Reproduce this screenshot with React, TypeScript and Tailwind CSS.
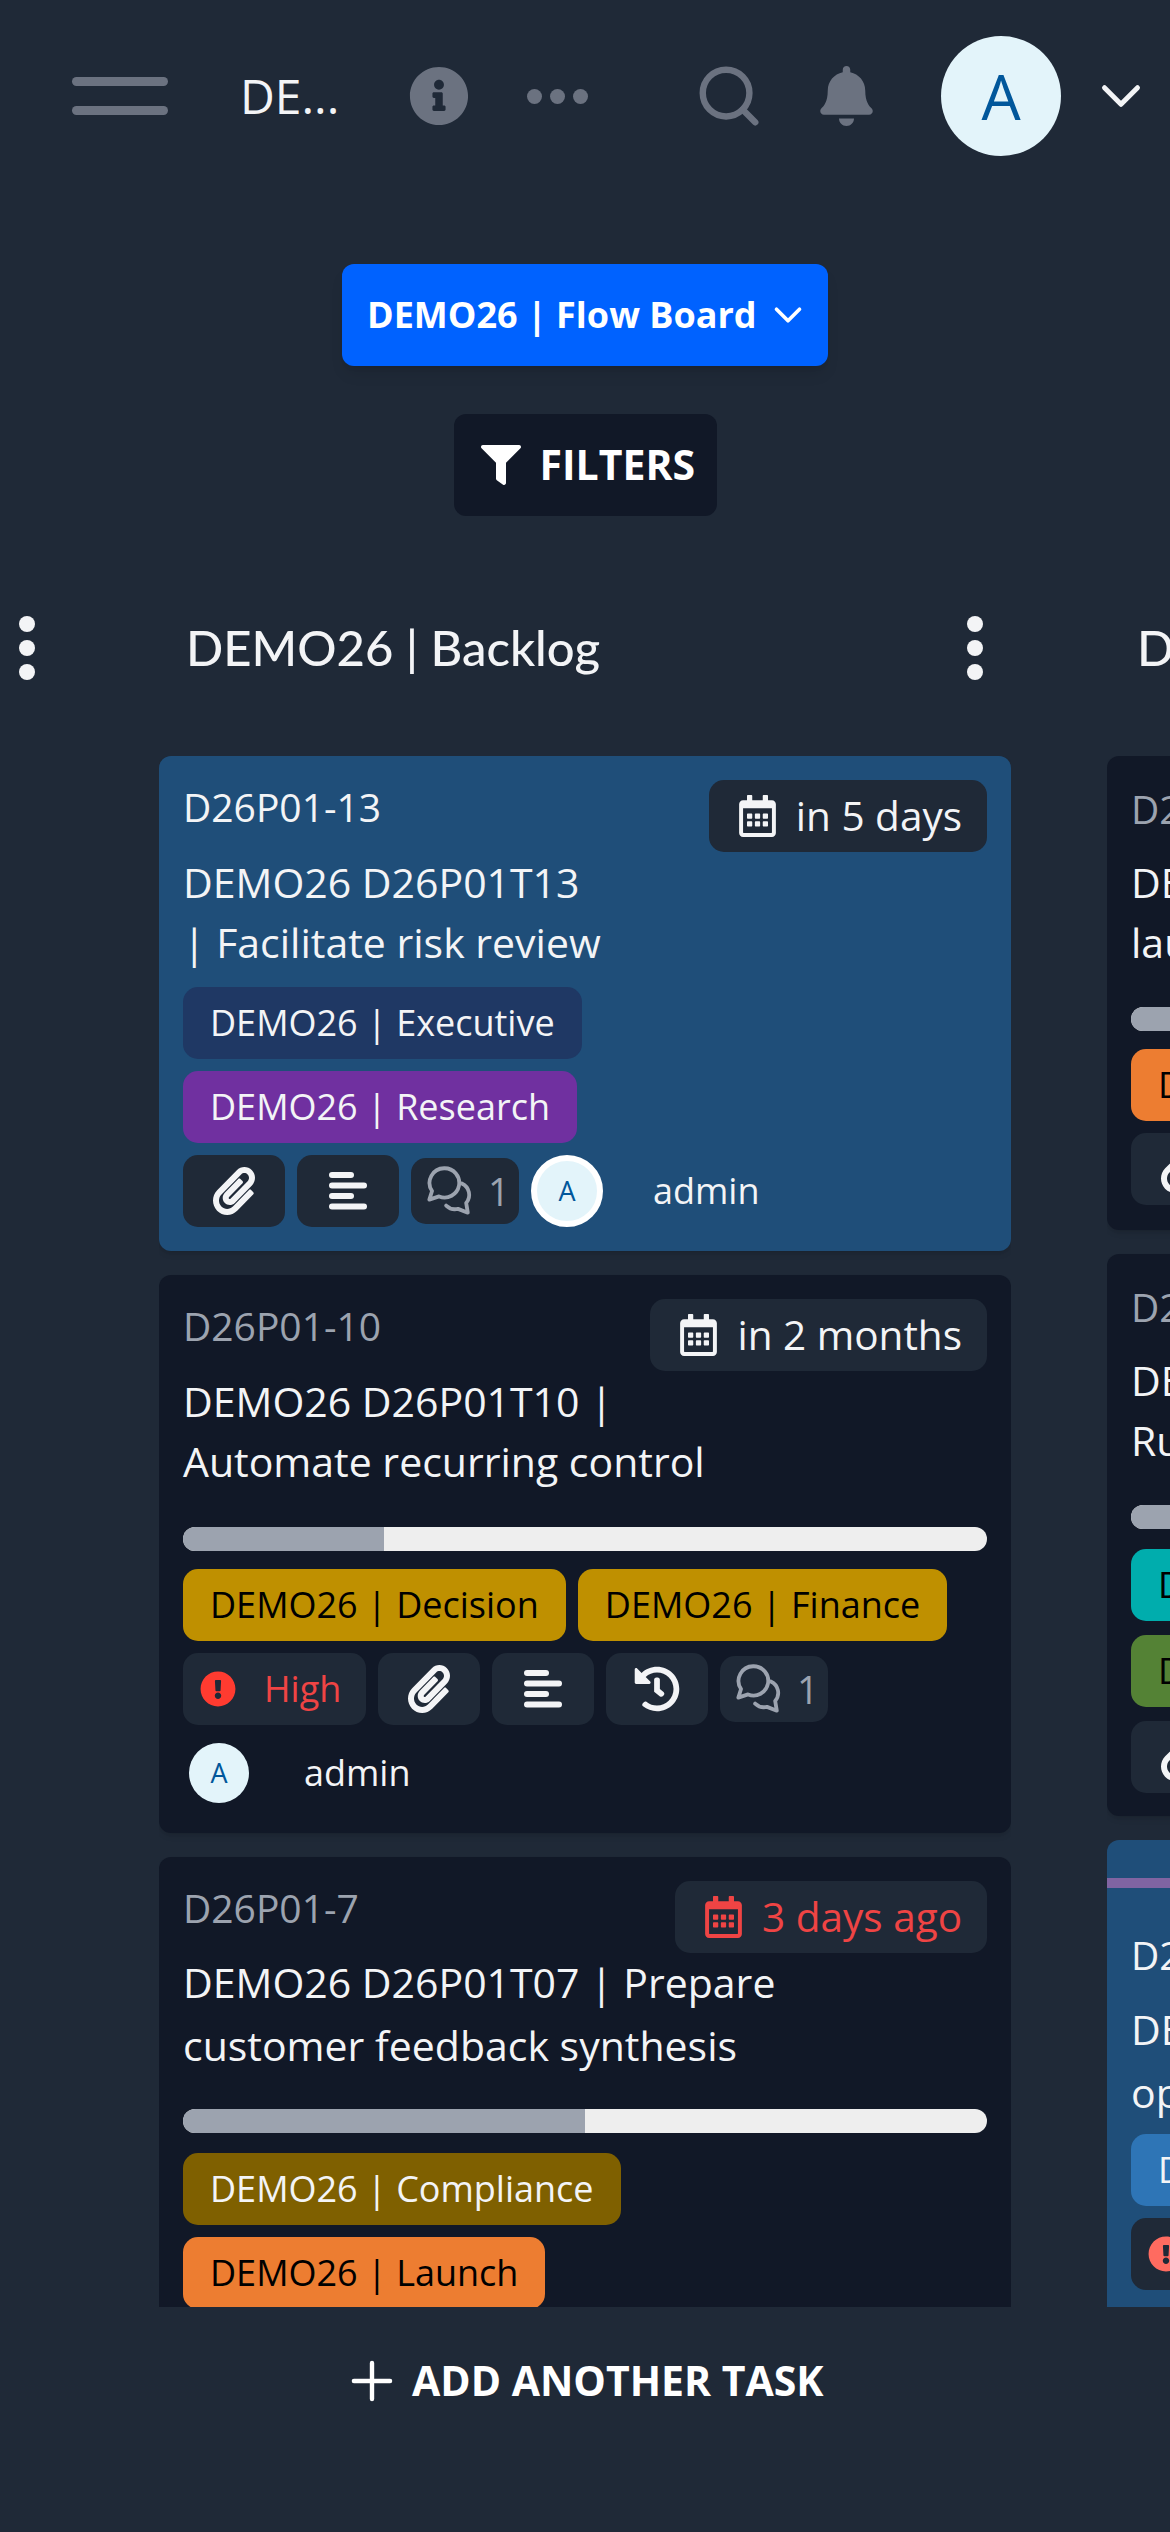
import { FaBell, FaExclamationCircle, FaFilter, FaHistory, FaInfoCircle, FaPaperclip, FaRegCalendarAlt } from "react-icons/fa";
import { FiChevronDown, FiPlus, FiSearch } from "react-icons/fi";

const IconBtn = ({ children }: { children: React.ReactNode }) => (
  <div className="flex h-[72px] w-[102px] shrink-0 items-center justify-center rounded-[15px] bg-[#1f2937] text-[#f3f4f6]">
    {children}
  </div>
);

const AlignIcon = () => (
  <svg width="38" height="38" viewBox="0 0 38 38" fill="currentColor">
    <rect x="0" y="0" width="25" height="6" rx="3" />
    <rect x="0" y="10.5" width="38" height="6" rx="3" />
    <rect x="0" y="21" width="25" height="6" rx="3" />
    <rect x="0" y="31.5" width="38" height="6" rx="3" />
  </svg>
);

const CommentsIcon = () => (
  <svg width="52" height="52" viewBox="0 0 48 48" fill="none" stroke="#9ca3af" strokeWidth="3.5" strokeLinejoin="round" strokeLinecap="round">
    <path d="M18 3a13.5 13.5 0 1 1-5 26l-9 3 2.500-8A13.500 13.500 0 0 1 18 3z" />
    <path d="M34 17a11.500 11.500 0 0 1 4 18l1.500 9-9-3.500a12 12 0 0 1-11-3" />
  </svg>
);

const Comments = () => (
  <div className="flex h-[66px] w-[108px] shrink-0 items-center gap-[11px] rounded-[15px] bg-[#1f2937] pl-[14px] text-[38px] text-[#9ca3af]">
    <CommentsIcon />
    <span>1</span>
  </div>
);

const Avatar = ({ ring }: { ring?: boolean }) => (
  <div
    className={
      ring
        ? "flex h-[72px] w-[72px] shrink-0 items-center justify-center rounded-full border-[6px] border-white bg-[#e3f4fa] text-[27px] text-[#01579b]"
        : "ml-[6px] flex h-[60px] w-[60px] shrink-0 items-center justify-center rounded-full bg-[#e3f4fa] text-[27px] text-[#01579b]"
    }
  >
    A
  </div>
);

const Tag = ({ className, children }: { className: string; children: React.ReactNode }) => (
  <div className={`flex h-[72px] shrink-0 items-center rounded-[15px] px-[27px] text-[36px] whitespace-nowrap ${className}`}>
    {children}
  </div>
);

const Chip = ({ children, red }: { children: React.ReactNode; red?: boolean }) => (
  <div
    className={
      red
        ? "flex h-[72px] items-center gap-[20px] rounded-[15px] bg-[#1f2937] pr-[25px] pl-[30px] text-[40.500px] text-[#ef4444]"
        : "flex h-[72px] items-center gap-[20px] rounded-[15px] bg-[#1f2937] pr-[25px] pl-[30px] text-[40.500px] text-[#f3f4f6]"
    }
  >
    <FaRegCalendarAlt className="h-[42px] w-[37px]" />
    <span>{children}</span>
  </div>
);

const Progress = ({ percent, className }: { percent: number; className: string }) => (
  <div className={`h-[24px] overflow-hidden rounded-full bg-[#eeeeee] ${className}`}>
    <div className="h-full bg-[#9ca3af]" style={{ width: `${percent}%` }} />
  </div>
);

const Dots = () => (
  <div className="flex w-[16px] shrink-0 flex-col gap-[8px]">
    <span className="h-[16px] w-[16px] rounded-full bg-[#f3f4f6]" />
    <span className="h-[16px] w-[16px] rounded-full bg-[#f3f4f6]" />
    <span className="h-[16px] w-[16px] rounded-full bg-[#f3f4f6]" />
  </div>
);

const Paperclip = () => <FaPaperclip className="h-[48px] w-[48px]" />;

const BacklogColumn = () => (
  <div className="w-[852px] shrink-0">
    <div className="flex h-[96px] items-center justify-between pr-[28px] pl-[27px]">
      <h2 className="font-['Lato'] text-[49px] font-medium text-[#f3f4f6]">DEMO26 | Backlog</h2>
      <Dots />
    </div>
    <div className="mt-[60px] flex h-[1551px] flex-col gap-[24px] overflow-hidden">
      {/* selected card */}
      <div className="shrink-0 rounded-[12px] bg-[#1f4e79] p-[24px] shadow-md">
        <div className="flex items-start justify-between">
          <span className="text-[39px] leading-[54px] text-[#f3f4f6]">D26P01-13</span>
          <Chip>in 5 days</Chip>
        </div>
        <p className="text-[41px] leading-[60px] text-[#f3f4f6]">
          DEMO26 D26P01T13
          <br />| Facilitate risk review
        </p>
        <div className="mt-[15px] flex flex-col items-start gap-[12px]">
          <Tag className="bg-[#1f3864] text-[#f3f4f6]">DEMO26 | Executive</Tag>
          <Tag className="bg-[#7030a0] text-[#f3f4f6]">DEMO26 | Research</Tag>
        </div>
        <div className="mt-[12px] flex items-center gap-[12px]">
          <IconBtn><Paperclip /></IconBtn>
          <IconBtn><AlignIcon /></IconBtn>
          <Comments />
          <Avatar ring />
          <span className="ml-[38px] text-[36px] text-[#f3f4f6]">admin</span>
        </div>
      </div>

      <div className="shrink-0 rounded-[12px] bg-[#111827] px-[24px] pt-[24px] pb-[30px] shadow-md">
        <div className="flex items-start justify-between">
          <span className="text-[39px] leading-[54px] text-[#9ca3af]">D26P01-10</span>
          <Chip>in 2 months</Chip>
        </div>
        <p className="text-[41px] leading-[60px] text-[#f3f4f6]">
          DEMO26 D26P01T10 |
          <br />
          Automate recurring control
        </p>
        <Progress percent={25} className="mt-[36px]" />
        <div className="mt-[18px] flex gap-[12px]">
          <Tag className="bg-[#bf9000] text-black">DEMO26 | Decision</Tag>
          <Tag className="bg-[#bf9000] text-black">DEMO26 | Finance</Tag>
        </div>
        <div className="mt-[12px] flex items-center gap-[12px]">
          <div className="flex h-[72px] w-[183px] items-center gap-[28px] rounded-[15px] bg-[#1f2937] pl-[17px] text-[36px] text-[#ef4444]">
            <FaExclamationCircle className="h-[36px] w-[36px] text-[#ff3b30]" />
            High
          </div>
          <IconBtn><Paperclip /></IconBtn>
          <IconBtn><AlignIcon /></IconBtn>
          <IconBtn><FaHistory className="h-[46px] w-[46px]" /></IconBtn>
          <Comments />
        </div>
        <div className="mt-[18px] flex items-center">
          <Avatar />
          <span className="ml-[55px] text-[36px] text-[#f3f4f6]">admin</span>
        </div>
      </div>

      <div className="shrink-0 rounded-[12px] bg-[#111827] p-[24px] shadow-md">
        <div className="flex items-start justify-between">
          <span className="text-[39px] leading-[54px] text-[#9ca3af]">D26P01-7</span>
          <Chip red>3 days ago</Chip>
        </div>
        <p className="-mt-[2px] text-[41px] leading-[63px] text-[#f3f4f6]">
          DEMO26 D26P01T07 | Prepare
          <br />
          customer feedback synthesis
        </p>
        <Progress percent={50} className="mt-[32px]" />
        <div className="mt-[20px] flex flex-col items-start gap-[12px]">
          <Tag className="bg-[#7f6000] text-[#f3f4f6]">DEMO26 | Compliance</Tag>
          <Tag className="bg-[#ed7d31] text-black">DEMO26 | Launch</Tag>
        </div>
      </div>
    </div>
  </div>
);

// only the left edge of this column is on screen
const NextColumn = () => (
  <div className="w-[852px] shrink-0">
    <div className="flex h-[96px] items-center pl-[30px]">
      <h2 className="font-['Lato'] text-[49px] font-medium text-[#f3f4f6]">DEMO26</h2>
    </div>
    <div className="mt-[60px] flex h-[1551px] flex-col gap-[24px] overflow-hidden text-[41px] text-[#f3f4f6]">
      <div className="h-[474px] shrink-0 rounded-[12px] bg-[#111827] px-[24px] pt-[30px] shadow-md">
        <div className="text-[39px] leading-[45px] text-[#9ca3af]">D26</div>
        <p className="mt-[21px] leading-[60px]">DEMO26<br />launch</p>
        <Progress percent={25} className="mt-[35px]" />
        <Tag className="mt-[18px] w-[300px] bg-[#ed7d31] text-black">DEMO26</Tag>
        <div className="mt-[12px]"><IconBtn><Paperclip /></IconBtn></div>
      </div>
      <div className="h-[562px] shrink-0 rounded-[12px] bg-[#111827] px-[24px] pt-[30px] shadow-md">
        <div className="text-[39px] leading-[45px] text-[#9ca3af]">D26</div>
        <p className="mt-[21px] leading-[60px]">DEMO26<br />Run</p>
        <Progress percent={25} className="mt-[35px]" />
        <Tag className="mt-[20px] w-[300px] bg-[#00adad] text-black">DEMO26</Tag>
        <Tag className="mt-[14px] w-[300px] bg-[#548235] text-black">DEMO26</Tag>
        <div className="mt-[14px]"><IconBtn><Paperclip /></IconBtn></div>
      </div>
      <div className="h-[470px] shrink-0 rounded-t-[12px] bg-[#1f4e79] pt-[38px]">
        <div className="h-[10px] bg-[#8064a2]" />
        <div className="px-[24px] pt-[44px]">
          <div className="text-[39px] leading-[45px]">D26</div>
          <p className="mt-[21px] leading-[63px]">DEMO26<br />open</p>
          <Tag className="mt-[10px] w-[300px] bg-[#2e75b6] text-[#f3f4f6]">DEMO26</Tag>
          <div className="mt-[12px] flex h-[72px] w-[183px] items-center rounded-[15px] bg-[#1f2937] pl-[17px]">
            <FaExclamationCircle className="h-[36px] w-[36px] text-[#ff6b60]" />
          </div>
        </div>
      </div>
    </div>
  </div>
);

export default function App() {
  return (
    <div className="flex h-[2532px] w-[1170px] flex-col overflow-hidden bg-[#1f2937] font-['Open_Sans',sans-serif]">
      <header className="flex items-center pt-[36px] pl-[72px] text-[#6b7280]">
        <div className="flex w-[96px] flex-col gap-[20px]">
          <span className="h-[9px] rounded-full bg-[#6b7280]" />
          <span className="h-[9px] rounded-full bg-[#6b7280]" />
        </div>
        <span className="ml-[72px] w-[96px] text-[48px] text-[#f3f4f6]">DE...</span>
        <FaInfoCircle className="ml-[73px] h-[60px] w-[60px]" />
        <div className="ml-[58px] flex gap-[8px]">
          <span className="h-[15px] w-[15px] rounded-full bg-[#6b7280]" />
          <span className="h-[15px] w-[15px] rounded-full bg-[#6b7280]" />
          <span className="h-[15px] w-[15px] rounded-full bg-[#6b7280]" />
        </div>
        <FiSearch className="ml-[106px] h-[70px] w-[70px] stroke-[2.2]" />
        <FaBell className="ml-[56px] h-[60px] w-[53px]" />
        <div className="ml-[68px] flex h-[120px] w-[120px] items-center justify-center rounded-full bg-[#e3f4fa] text-[62px] font-medium text-[#01579b]">
          A
        </div>
        <FiChevronDown className="ml-[27px] h-[66px] w-[66px] shrink-0 stroke-[1.8] text-[#f3f4f6]" />
      </header>

      <div className="mt-[108px] flex justify-center">
        <button className="flex h-[102px] w-[486px] items-center gap-[8px] rounded-[12px] bg-[#0062ff] pl-[25px] text-[36px] font-bold text-white shadow-lg">
          DEMO26 | Flow Board
          <FiChevronDown className="h-[46px] w-[46px] shrink-0 stroke-[1.9]" />
        </button>
      </div>

      <div className="mt-[48px] flex justify-center">
        <button className="flex h-[102px] w-[263px] items-center gap-[19px] rounded-[12px] bg-[#111827] pl-[27px] text-[41px] font-bold text-white">
          <FaFilter className="h-[40px] w-[40px]" />
          FILTERS
        </button>
      </div>

      <div className="mt-[84px] flex gap-[96px]">
        <div className="flex h-[96px] w-[63px] shrink-0 items-center justify-end pr-[28px]">
          <Dots />
        </div>
        <BacklogColumn />
        <NextColumn />
      </div>

      <div className="mt-[43px] flex items-center gap-[9px] pl-[341px] text-[41px] font-bold text-white">
        <FiPlus className="h-[62px] w-[62px] shrink-0 stroke-[1.7]" />
        ADD ANOTHER TASK
      </div>
    </div>
  );
}
